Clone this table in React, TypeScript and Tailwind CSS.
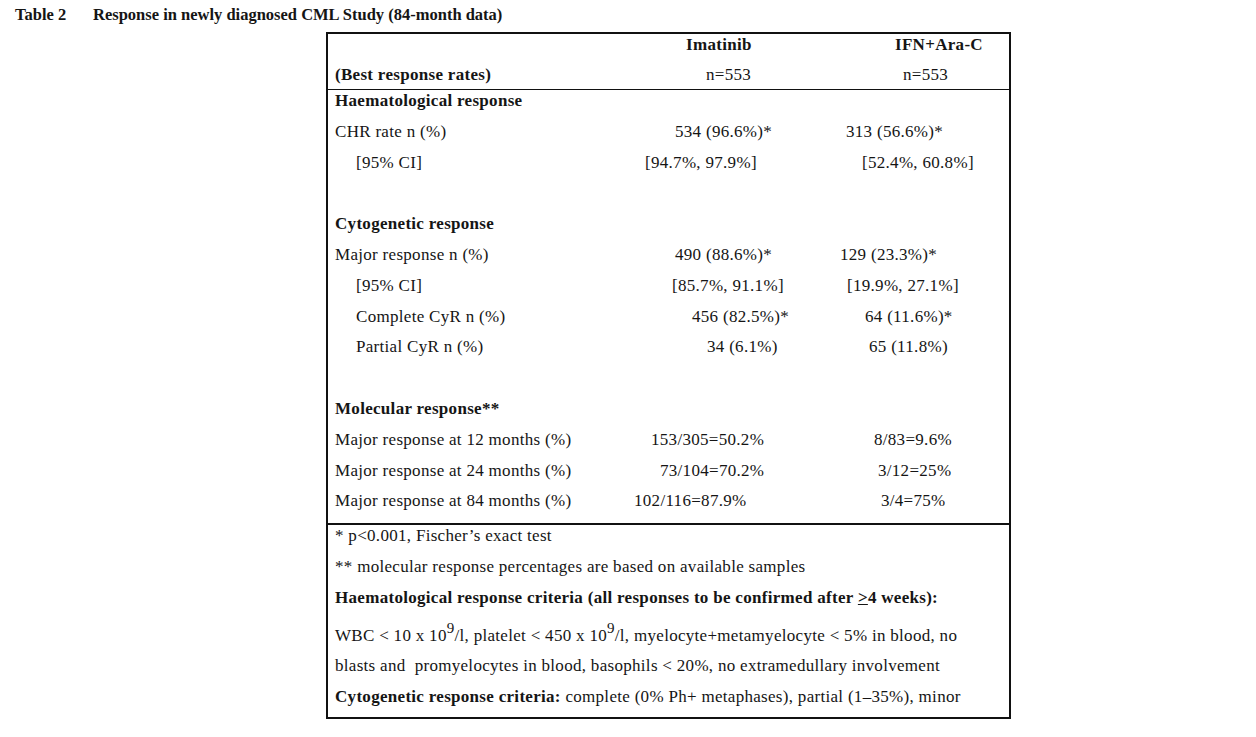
import React from "react"

type Row = {
  label?: string
  bold?: boolean
  indent?: boolean
  a?: string
  aPad?: string
  b?: string
  bPad?: string
}

const rows: Row[] = [
  { label: "Haematological response", bold: true },
  { label: "CHR rate n (%)", a: "534 (96.6%)*", aPad: "pl-[47px]", b: "313 (56.6%)*", bPad: "pl-[23px]" },
  { label: "[95% CI]", indent: true, a: "[94.7%, 97.9%]", aPad: "pl-[17px]", b: "[52.4%, 60.8%]", bPad: "pl-[39px]" },
  {},
  { label: "Cytogenetic response", bold: true },
  { label: "Major response n (%)", a: "490 (88.6%)*", aPad: "pl-[47px]", b: "129 (23.3%)*", bPad: "pl-[17px]" },
  { label: "[95% CI]", indent: true, a: "[85.7%, 91.1%]", aPad: "pl-[44px]", b: "[19.9%, 27.1%]", bPad: "pl-[24px]" },
  { label: "Complete CyR n (%)", indent: true, a: "456 (82.5%)*", aPad: "pl-[64px]", b: "64 (11.6%)*", bPad: "pl-[42px]" },
  { label: "Partial CyR n (%)", indent: true, a: "34 (6.1%)", aPad: "pl-[79px]", b: "65 (11.8%)", bPad: "pl-[46px]" },
  {},
  { label: "Molecular response**", bold: true },
  { label: "Major response at 12 months (%)", a: "153/305=50.2%", aPad: "pl-[23px]", b: "8/83=9.6%", bPad: "pl-[51px]" },
  { label: "Major response at 24 months (%)", a: "73/104=70.2%", aPad: "pl-[32px]", b: "3/12=25%", bPad: "pl-[55px]" },
  { label: "Major response at 84 months (%)", a: "102/116=87.9%", aPad: "pl-[6px]", b: "3/4=75%", bPad: "pl-[58px]" },
]

export default function App() {
  return (
    <div
      className="min-h-[737px] w-full bg-white text-[#151515] text-[17px] leading-[20px] tracking-[0.3px]"
      style={{ fontFamily: '"Liberation Serif", "Times New Roman", serif' }}
    >
      {/* caption */}
      <div className="flex pt-[5px] pl-[15px] h-[25px] font-bold text-[16.5px] tracking-normal">
        <span className="w-[78px]">Table 2</span>
        <span>Response in newly diagnosed CML Study (84-month data)</span>
      </div>

      <div className="ml-[326px] mt-[7px] w-[685px] border-2 border-[#111]">
        {/* header */}
        <div className="border-b border-[#111]">
          <div className="flex h-[31px] pt-[1px] font-bold">
            <div className="w-[300px]" />
            <div className="w-[195px] pl-[58px]">Imatinib</div>
            <div className="flex-1 pl-[72px]">IFN+Ara-C</div>
          </div>
          <div className="flex h-[24px]">
            <div className="w-[300px] pl-[7px] font-bold">(Best response rates)</div>
            <div className="w-[195px] pl-[78px]">n=553</div>
            <div className="flex-1 pl-[80px]">n=553</div>
          </div>
        </div>

        {/* body */}
        <div className="pt-[1px] pb-[1px] border-b-2 border-[#111]">
          {rows.map((r, i) => (
            <div key={i} className="flex h-[30.8px]">
              <div className={`w-[300px] ${r.indent ? "pl-[28px]" : "pl-[7px]"} ${r.bold ? "font-bold" : ""}`}>
                {r.label}
              </div>
              <div className={`w-[195px] whitespace-nowrap ${r.aPad ?? ""}`}>{r.a}</div>
              <div className={`flex-1 whitespace-nowrap ${r.bPad ?? ""}`}>{r.b}</div>
            </div>
          ))}
        </div>

        {/* footnotes */}
        <div className="pl-[7px] pt-[1px]">
          <div className="h-[31px]">* p&lt;0.001, Fischer’s exact test</div>
          <div className="h-[31px]">** molecular response percentages are based on available samples</div>
          <div className="h-[31px] font-bold">
            Haematological response criteria (all responses to be confirmed after <span className="underline">&gt;</span>4 weeks):
          </div>
          <div className="h-[37px] pt-[7px] whitespace-nowrap">
            WBC &lt; 10 x 10<sup className="text-[15px] top-[-0.55em]">9</sup>/l, platelet &lt; 450 x 10
            <sup className="text-[15px] top-[-0.55em]">9</sup>/l, myelocyte+metamyelocyte &lt; 5% in blood, no
          </div>
          <div className="h-[31px] whitespace-nowrap">
            blasts and{"\u00a0"} promyelocytes in blood, basophils &lt; 20%, no extramedullary involvement
          </div>
          <div className="h-[30px] whitespace-nowrap">
            <span className="font-bold">Cytogenetic response criteria:</span> complete (0% Ph+ metaphases), partial (1–35%), minor
          </div>
        </div>
      </div>
    </div>
  )
}
